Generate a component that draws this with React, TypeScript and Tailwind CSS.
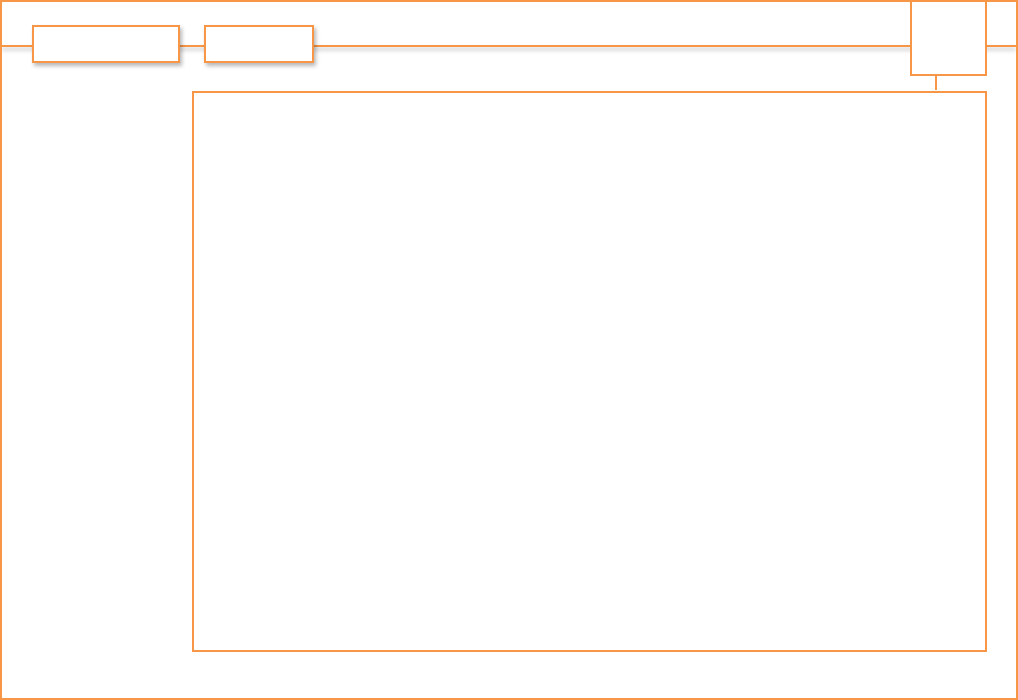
export default function App() {
  return (
    <div className="w-[1018px] h-[700px] bg-white border-2 border-[#f79646] overflow-hidden">
      {/* Header strip with tabs riding on the rule */}
      <div className="relative h-[89px] flex items-start">
        <div className="absolute left-0 right-0 top-[43px] h-[2px] bg-[#f79646] shadow-[0_3px_4px_rgba(0,0,0,0.28)]" />
        <div className="relative flex gap-[24px] mt-[23px] ml-[30px]">
          <div className="w-[148px] h-[38px] bg-white border-2 border-[#f79646] shadow-[2px_3px_4px_rgba(0,0,0,0.28)]" />
          <div className="w-[110px] h-[38px] bg-white border-2 border-[#f79646] shadow-[2px_3px_4px_rgba(0,0,0,0.28)]" />
        </div>
        <div className="relative ml-auto mr-[29px] -mt-[2px] w-[77px] h-[76px] bg-white border-2 border-[#f79646]">
          <div className="absolute left-[23px] top-full w-[2px] h-[16px] bg-[#f79646]" />
        </div>
      </div>

      {/* Main content panel */}
      <div className="pl-[190px] pr-[29px]">
        <div className="h-[561px] bg-white border-2 border-[#f79646]" />
      </div>
    </div>
  );
}
